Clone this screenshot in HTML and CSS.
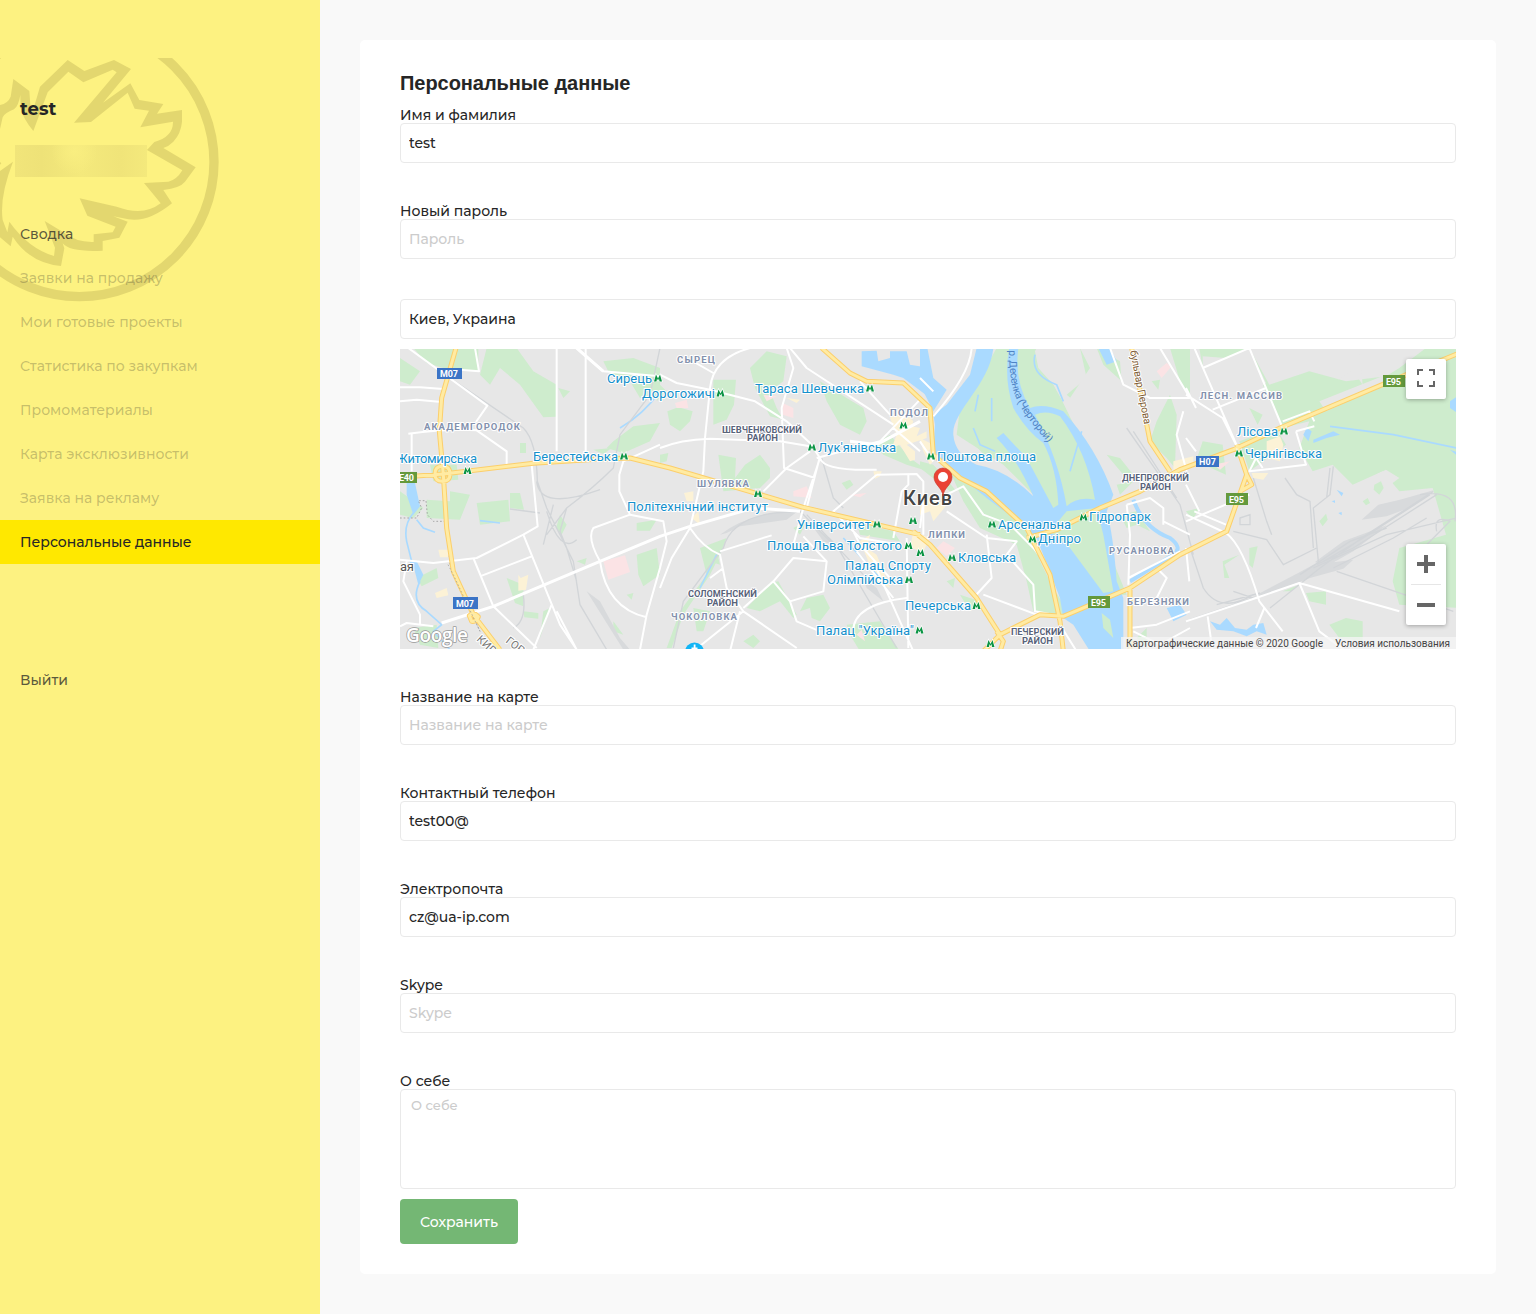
FILE: index.html
```html
<!DOCTYPE html>
<html lang="ru">
<head>
<meta charset="utf-8">
<title>Персональные данные</title>
<link rel="stylesheet" href="styles.css">
</head>
<body>
<div class="layout">
<aside class="sidebar">
  <svg class="emblem" viewBox="0 54 690 740" aria-hidden="true">
    <circle cx="238" cy="366" r="404" fill="none" stroke="#e3d76f" stroke-width="28"/>
    <path fill="#e3d76f" d="M0 195Q24 190 32 170L40 117L88 153L91 195L101 205L120 140L203 60L253 93L342 60L393 87L309 188L391 130L418 180L490 192L471 221L546 210V245Q543 280 520 305Q505 320 490 324L587 382L555 425Q540 444 490 450L516 490Q445 548 385 538L340 529L383 545L358 593L308 603V632Q210 637 188 610L193 625L183 678Q90 670 38 590L32 619L0 592V393L39 365Q-2 470 8 540L22 577L28 545Q85 625 162 648L165 623L134 543L190 577Q230 608 281 606V583L338 577L347 560L262 527L239 475L350 500Q430 530 482 490L432 429L505 425Q530 420 547 391L441 330L463 306Q520 290 519 245L421 262L447 212L404 206L383 158L273 246L222 248L350 97L338 89L250 127L205 95L143 157L100 273Q70 238 62 205L61 165Q55 200 42 208Q12 220 8 232L0 267Z"/>
    <path fill="#e3d76f" d="M0 366L4 370L0 374Z"/>
  </svg>
  <div class="user-name">test</div>
  <div class="user-mask"></div>
  <nav class="menu">
    <a class="menu-item strong">Сводка</a>
    <a class="menu-item">Заявки на продажу</a>
    <a class="menu-item">Мои готовые проекты</a>
    <a class="menu-item">Статистика по закупкам</a>
    <a class="menu-item">Промоматериалы</a>
    <a class="menu-item">Карта эксклюзивности</a>
    <a class="menu-item">Заявка на рекламу</a>
    <a class="menu-item active">Персональные данные</a>
    <a class="menu-item strong logout">Выйти</a>
  </nav>
</aside>
<main class="content">
<form class="card">
  <h1 class="title">Персональные данные</h1>
  <div class="field"><label class="label">Имя и фамилия</label><input class="input" value="test"></div>
  <div class="field"><label class="label">Новый пароль</label><input class="input" placeholder="Пароль"></div>
  <div class="field">
    <input class="input" value="Киев, Украина">
    <div class="map">
<svg class="map-canvas" viewBox="400 349 1056 300">
<g transform="translate(400 348) scale(.333333)">
<rect width="3200" height="910" fill="#e7e7e7"/>
<!-- parks -->
<g fill="#ceeccd">
  <path d="M40 0H235V70L150 66L80 45ZM260 0H350L400 70L470 110L468 206L430 208L360 110L300 60L270 110L240 80ZM0 30L60 70L30 110L0 100ZM475 120L510 130L490 150ZM610 40L700 30L780 60L780 150L720 150L690 100L630 80ZM640 280L700 235L780 225L750 280L670 315L620 300ZM580 305L635 300L610 318ZM150 430L210 440L180 515L80 510V455L150 460ZM230 465L325 455L330 520L240 530ZM330 435L360 435L372 485L330 480ZM360 285H378V315H360ZM0 430L70 480L40 510L0 500ZM320 690L370 710V775L345 765ZM370 790L415 795V812L373 808ZM710 620L770 600L780 680L730 715L715 680ZM710 525L770 515L750 548L710 548ZM50 690L110 660L115 690L65 715ZM480 500L500 530L485 560L468 540ZM530 640L560 630L555 650ZM680 740L700 735L695 755ZM640 820L670 860L640 850ZM90 350L170 350L175 395L100 400ZM40 840L110 830L115 900L60 890ZM430 790L450 780L420 870ZM780 110L800 130L770 160Z"/>
  <g transform="translate(780)"><path d="M160 95L228 95L222 170L200 215L160 230V180ZM22 190L55 178L98 190L90 220L60 250L30 230ZM270 60L320 10L380 25L370 100L330 130L350 180L370 215L330 205L285 120ZM480 100L560 150L610 180L620 220L600 260L540 230L500 160ZM175 320L228 330L225 390L255 350L300 320L330 360L330 390L300 420L190 430ZM545 405L570 395L580 410L560 425ZM120 600L200 570L180 620L150 680L70 800L35 900L20 900L60 790L140 680ZM330 705L355 700L410 800L400 810L360 760L300 790L260 780ZM440 750L490 740L510 780L480 820L455 810L450 780L420 790ZM560 830L660 820L720 910H600L570 860ZM100 780L150 790L130 850L110 850ZM640 290L690 260L750 330L805 370L740 350L670 320ZM590 525L700 550L720 580L600 560ZM400 540L440 520L420 560ZM0 320L25 315L20 340L0 345ZM150 640L175 630L180 650ZM250 880L280 860L300 880L280 900Z"/></g>
  <g transform="translate(1560)"><path d="M230 0H480L510 60L450 150L510 310L550 470L530 520L620 740L560 745L440 600L400 550L410 490L370 470L250 350L110 260L120 180L180 90ZM690 280L710 220L750 140L770 200L765 360L740 330ZM695 100L720 95L715 125ZM750 0H810V150L780 100ZM90 370L140 390L250 460L340 570L360 640L400 720L450 800L400 800L340 790L320 700L290 590L180 540L130 460ZM560 320L600 330L640 380L610 380ZM600 500L650 490L690 550L650 530L620 540ZM0 340L40 350L110 430L90 430L0 360ZM530 0L600 40L605 100L550 50ZM650 870L680 840V900ZM120 740L180 760L150 790ZM80 700L105 690L100 720ZM590 410L640 400L600 440ZM545 790L570 800L580 850L545 840Z"/><path fill="#e7e7e7" d="M345 10L355 60L400 110L425 155L510 330L540 440L580 430L560 320L500 190L440 140L500 90L480 0H350Z"/></g>
  <g transform="translate(2358)"><path d="M40 0H190L250 110L370 70L480 100L600 85L640 60L720 0H818V780L640 770L620 700L640 600L780 560L740 420L640 430L590 370L500 410L440 350L380 370L340 300L370 220L290 240L230 110L50 60ZM50 280L110 290L120 380L30 340ZM160 280L270 240L300 290L190 370ZM190 180L230 200L215 230ZM0 490L40 480L20 515ZM110 640L160 620L115 650L130 690L115 690ZM190 600L215 595L200 660L190 650ZM290 730L340 710L315 730ZM360 735L420 730L420 770L370 760ZM430 830L480 810L530 820V880L460 870Z"/><path fill="#e7e7e7" d="M50 0H190L240 105L150 180L80 180L50 70ZM490 0H520L530 110L500 65L455 95L480 60ZM400 160L600 80L640 90L420 190ZM570 380L600 365L640 390L600 420Z"/></g>
  <g transform="translate(2358)"><path d="M565 410L585 400L593 420L580 440L563 425ZM530 460L545 450L552 465L540 472ZM400 520L420 497L425 515L410 535ZM40 0H190L165 12L120 30L50 25Z"/></g>
</g>
<!-- built-up and hospital tints -->
<g fill="#fcf2d6"><path d="M115 605H145V628H120ZM105 735L140 720L145 742L110 750ZM355 680L362 690L385 680L378 725L355 728ZM852 435L880 430V460L860 460ZM875 510L895 490L900 530ZM1470 210L1500 180L1540 220L1535 235L1560 240L1550 265L1580 250L1580 270L1520 290L1545 310V335L1530 340L1500 290L1475 300L1490 260ZM1560 270L1600 290L1585 310L1600 340L1590 350L1570 310ZM1560 470L1590 450L1640 470L1625 490L1600 520L1590 490L1560 500ZM1540 550L1590 570L1570 610L1530 600ZM1380 580L1410 560L1400 600L1430 620L1470 720L1430 700ZM1160 150L1200 155L1190 165ZM1420 370L1445 370L1440 385L1425 392ZM2600 280L2640 265L2650 290L2640 340L2600 330ZM2555 375L2605 375L2590 395L2560 390ZM2320 340L2380 325V345L2320 370Z"/></g>
<g fill="#fbe3e5"><path d="M610 640L675 622L690 672L625 695ZM825 165L860 155L865 180L830 180ZM1090 140L1130 145L1100 160ZM1148 165L1180 180V210L1148 200ZM1180 430L1220 415L1235 450L1180 445ZM1350 440L1400 435L1380 448ZM1610 600L1630 580L1665 600L1640 625ZM1370 860L1385 845L1395 880ZM2270 70L2300 45L2315 55L2285 90ZM2440 350L2490 340L2460 365Z"/></g>
<!-- water -->
<g fill="#aadaff"><path d="M20 405H45L60 475L40 500L20 440ZM27 640L50 640L70 680L55 710L42 660Z"/><path d="M1385 10L1430 8L1435 40L1470 30V10H1520L1530 50L1590 60V150L1510 90L1480 80L1385 55Z"/><path d="M1560 0H1582L1600 90L1640 125L1600 190L1560 110Z"/><path d="M1730 0H1780C1770 110 1655 190 1660 260Q1665 320 1730 350Q1820 365 1900 445Q1850 330 1790 270L1810 255L1880 330L1960 480L1975 470Q1970 360 1930 285Q1880 250 1840 180Q1810 90 1828 0H1855Q1842 100 1890 180Q1930 165 1990 190Q2090 300 2140 440L2120 490Q2140 560 2150 700L2170 750V910H2070L2020 830L1990 810L1980 750L1910 570L1880 540L1760 450L1680 385L1600 310L1605 230L1600 200L1640 170L1710 80Z"/><path d="M2095 0H2130L2150 40L2120 50ZM2740 275L2800 250L2820 260L2780 270L2740 285ZM2430 820L2460 830L2480 810L2505 840L2540 845L2560 830L2590 825L2600 860L2570 850L2540 865L2500 850L2450 845ZM2720 240L2735 250L2725 280L2710 260ZM3150 160L3180 140V200L3150 180ZM3150 305L3180 315V330ZM2810 425L2830 435L2825 445ZM2795 460L2805 457V465ZM2815 495L2825 492V502ZM2300 780L2340 770L2360 800L2320 820Z"/></g>
<g fill="#ceeccd"><path d="M1905 200Q1940 185 1980 205Q2060 310 2085 455Q2030 445 2000 475Q1975 330 1905 200ZM2000 490L2090 480L2110 560L2140 730L2110 735L2010 600L1950 550ZM1715 250L1775 290L1760 330L1725 290ZM2105 795L2130 815L2140 870L2110 840Z"/></g>
<g fill="none" stroke="#aadaff" stroke-width="5"><path d="M40 495Q10 530 20 580L35 640M60 700Q30 760 80 790L125 830L100 850L150 905M50 515L70 540L105 553M780 130Q730 200 660 240M1905 20Q1890 80 1970 110L1990 160M1735 140L1725 190M1775 150V220M1720 240L1740 290L1785 310M2010 370L2045 250M240 518L300 525M900 720L950 620M1330 570L1440 690M2790 235L2980 260L3170 300"/><path stroke-width="12" d="M2200 455Q2230 540 2310 570Q2350 600 2320 620L2190 700"/></g>
<!-- railways -->
<g fill="#d8dadc"><path d="M960 560Q1050 490 1190 492L1160 515L1020 535L980 555ZM1230 525L1290 570L1320 600L1270 580ZM1390 690L1430 720L1450 760L1400 720ZM2558 747L2700 672L2740 650L2860 635L2830 662L2730 690L2600 740ZM2745 642L2830 580L2960 532L2860 610L2780 655ZM2885 515L2935 470L3000 455L3100 427L3040 475L2960 505ZM560 730L600 760L660 870L690 905H670Z"/></g>
<g fill="none" stroke="#d2d5d8" stroke-width="4"><path d="M150 90L370 240Q410 280 412 400L440 480L520 640L540 770L620 905M780 0L750 140L660 260L640 360Q580 420 500 480L440 560M410 400Q420 490 600 425M430 590L460 470M440 490Q480 620 530 575M500 480L480 550L500 600L530 700M370 740Q380 820 340 840M330 483L420 495M1265 330L1300 450L1330 480M1190 492Q1000 490 970 600L850 760L820 900M1200 490L1320 610L1490 900M1220 500L1390 680M2180 240L2340 470L2380 620M2200 250L2330 450M2370 600L2410 720Q2460 800 2560 740M2655 390L2690 440L2730 460L2740 600M2800 355L2790 440L2740 480L2755 640M2790 360L2780 450M2750 650L2860 600L3110 440M2740 660L2960 560L3170 510M2770 640L2890 570L3090 440M2800 660L2980 570L3080 510M2700 680L2850 580L2960 540M2610 780L2760 660L2900 560L3100 430M2810 670L3160 790M3080 590L3150 520Q3100 500 3110 550M2500 550L2600 575L2650 650L2750 600M2560 390L2600 520L2615 560M2500 730L2560 750L2370 815M2450 770L2580 735M3060 440Q3180 420 3165 520M2520 510L2550 500V530L2520 530Z"/></g>
<!-- streets -->
<g class="streets">
<path d="M25 0L262 173L228 222M225 0L237 70L180 65M0 118H60L130 123M0 160L50 155L125 162M470 0V310M530 0L610 70L780 85M557 0V330M25 257Q150 240 230 247L320 310V350M35 257V370M395 350L413 535L370 560L230 630L100 645L0 635M370 560L480 830L530 905M220 630L280 775L410 900M395 625L240 685M455 770L400 905M470 790L530 905M20 640L10 700L60 800V830M0 835L20 825L100 835M780 290L670 340L658 380V430L690 500L580 540Q560 570 600 640Q620 780 740 808M690 500L790 520L800 580L780 660L740 800L720 905"/>
<path class="major" d="M125 825L280 775L600 640L780 565L870 535L1060 480L1200 490M1560 220L1430 290L1350 280M530 0L610 70"/>
<g transform="translate(780)"><path d="M0 80L50 105L150 125L285 160L380 220L450 285L480 330Q490 370 650 365M0 300Q60 275 150 272L360 280L450 295M270 0Q160 30 150 120L135 270L130 370L90 540L35 630L0 720M90 35L160 75M380 0L400 60L365 180L372 360L465 390M480 325L440 480M450 310L380 360L310 430M480 330L430 480L400 590M335 562L180 610M390 0L440 60L700 230M600 100L690 200M780 155L660 280L470 330M650 380L770 378L790 400V560M650 380L520 490L600 570L720 590M90 540Q130 600 180 620L200 720L250 790L100 910M250 780L340 700L400 630L500 640M340 700L390 760L410 820L480 850M250 790L410 900M240 790L210 910M430 565L500 640L490 730L390 760M560 510L600 590L690 690M640 640L760 910M590 610L700 750M740 570L745 900M580 860Q570 770 740 750M730 220M745 380V410L725 430L700 570M190 660L150 690M700 240L780 310"/></g>
<g transform="translate(1560)"><path d="M155 0Q150 80 40 205M0 280L40 340M80 440L130 415L190 500L270 530L340 600L380 650M80 490L200 570L290 580L260 620L340 710L345 790L400 800M200 560L215 690L160 750M190 740L350 800M570 0L610 110L690 150H810M720 0L810 150M620 470L690 450L730 480L730 530M620 470L630 560L625 710M730 520L810 560M625 690L780 610M630 840L710 830L810 790M640 850L720 890L810 840M710 660L740 690L710 750M790 190L770 260L800 370M0 90L40 130M10 460L0 540M420 830L470 910"/></g>
<g transform="translate(2358)"><path d="M25 0L160 310L180 370M50 60L190 0L290 240M80 185L240 120M290 220L370 190L385 220M0 140L110 210L155 300M330 250L360 350L190 370L210 330L230 360M330 250L385 235M0 520L190 440M25 490L120 530M0 500L120 555Q170 590 220 760L290 850M40 490L0 410M0 600L10 700M0 820L210 750L340 705L640 790M340 705L400 850L480 910M65 805L80 910M235 780L210 840M0 120L30 180M0 270L30 310"/></g>
</g>
<g fill="none" stroke="#888" stroke-width="2" stroke-dasharray="5 6"><path d="M0 510H50L65 480L55 458H78L82 500L100 520H138L150 650L240 850"/></g>
<!-- arterial roads -->
<g fill="none" stroke-linejoin="round">
<g stroke="#fccf6b" stroke-width="15"><use href="#art"/></g>
<g stroke="#ffeba3" stroke-width="9"><path id="art" d="M168 0L125 150L118 250L130 380L140 540L160 670L220 800L300 905M0 388L130 378L400 346L600 333L690 330L810 360L1210 478L1560 560M105 378Q105 355 127 355Q150 355 150 378Q150 400 127 400Q105 400 105 378ZM208 803Q220 790 235 806Q230 822 215 820ZM1265 0L1350 75L1400 100L1510 105L1590 180L1600 320L1680 390L1760 430L1880 540L1950 680L1980 820L1990 910M1880 570L1970 545L2100 480L2220 430L2340 365L2500 305L2640 240L2970 100L3190 10M2195 0L2250 280L2310 370M1540 550L1590 590L1730 750L1800 860L1750 910M1800 860L1920 800L1990 805L2190 720L2340 620L2480 550L2540 380L2510 290M2190 720V910M1790 850L1810 880L1800 910M2540 380L2555 410L2520 430"/></g>
<path d="M144 650L160 680L220 808L240 850" stroke="#999" stroke-width="2" stroke-dasharray="5 6"/>
</g>
</g>
<!-- road shields -->
<g class="shield"><path fill="#3b74c6" d="M437 368H462V379H437ZM453 597H478V609H453ZM1196 456H1219V467H1196Z"/><path fill="#64993c" d="M400 472H417V483H400ZM1088 596H1110V608H1088ZM1226 493H1248V505H1226ZM1383 375H1405V387H1383Z"/>
<text x="440" y="377" textLength="18">M07</text><text x="456" y="606.500" textLength="18">M07</text><text x="1199" y="465" textLength="17">H07</text><text x="399" y="481" textLength="15">E40</text><text x="1091" y="605.500" textLength="15">E95</text><text x="1229" y="502.500" textLength="15">E95</text><text x="1386" y="384.500" textLength="15">E95</text></g>
<!-- metro marks -->
<defs><path id="m" d="M-4 3L-2-4L0 0L2-4L4 3H1.500L1 0L0 2L-1 0L-1.500 3Z"/></defs>
<g fill="#0b9444" stroke="#fff" stroke-width="1.200" paint-order="stroke"><use href="#m" x="658" y="378.500"/><use href="#m" x="720.500" y="393.500"/><use href="#m" x="870" y="388.500"/><use href="#m" x="903.500" y="425.500"/><use href="#m" x="812" y="447.500"/><use href="#m" x="931" y="456.500"/><use href="#m" x="467.500" y="471"/><use href="#m" x="624" y="456.500"/><use href="#m" x="758" y="494"/><use href="#m" x="877" y="524.500"/><use href="#m" x="913" y="521"/><use href="#m" x="908.500" y="546"/><use href="#m" x="920.500" y="553"/><use href="#m" x="909" y="580"/><use href="#m" x="992" y="524.500"/><use href="#m" x="1083.500" y="517.500"/><use href="#m" x="1032.500" y="539.500"/><use href="#m" x="952" y="558"/><use href="#m" x="976.500" y="606"/><use href="#m" x="919.500" y="630.500"/><use href="#m" x="990.500" y="644"/><use href="#m" x="1284" y="431.500"/><use href="#m" x="1239" y="453.500"/></g>
<g class="station" transform="translate(0 -.5)">
<text x="607" y="383" textLength="45">Сирець</text><text x="642" y="398" textLength="73">Дорогожичі</text><text x="755" y="393" textLength="109">Тараса Шевченка</text><text x="818" y="452" textLength="78">Лук'янівська</text><text x="937" y="461" textLength="99">Поштова площа</text><text x="396" y="463" textLength="81">Житомирська</text><text x="533" y="461" textLength="85">Берестейська</text><text x="627" y="511" textLength="141">Політехнічний інститут</text><text x="797" y="529" textLength="74">Університет</text><text x="767" y="550" textLength="135">Площа Льва Толстого</text><text x="845" y="570" textLength="86">Палац Спорту</text><text x="827" y="584" textLength="76">Олімпійська</text><text x="998" y="529" textLength="73">Арсенальна</text><text x="1089" y="521.500" textLength="62">Гідропарк</text><text x="1038" y="543.500" textLength="43">Дніпро</text><text x="958" y="562.500" textLength="58">Кловська</text><text x="905" y="610.500" textLength="66">Печерська</text><text x="816" y="635" textLength="98">Палац "Україна"</text><text x="1237" y="436" textLength="41">Лісова</text><text x="1245" y="458" textLength="77">Чернігівська</text></g>
<g class="area"><text x="677" y="363" textLength="38">СЫРЕЦ</text><text x="890" y="415.500" textLength="38">ПОДОЛ</text><text x="424" y="430" textLength="96">АКАДЕМГОРОДОК</text><text x="697" y="486.500" textLength="52">ШУЛЯВКА</text><text x="928" y="537.500" textLength="37">ЛИПКИ</text><text x="671" y="620" textLength="66">ЧОКОЛОВКА</text><text x="1109" y="553.500" textLength="65">РУСАНОВКА</text><text x="1127" y="604.500" textLength="62">БЕРЕЗНЯКИ</text><text x="1200" y="399" textLength="82">ЛЕСН. МАССИВ</text></g>
<g class="district"><text x="722" y="432.500" textLength="80">ШЕВЧЕНКОВСКИЙ</text><text x="747" y="441" textLength="31">РАЙОН</text><text x="688" y="597" textLength="69">СОЛОМЕНСКИЙ</text><text x="707" y="606" textLength="31">РАЙОН</text><text x="1122" y="481" textLength="67">ДНЕПРОВСКИЙ</text><text x="1140" y="490" textLength="31">РАЙОН</text><text x="1011" y="635" textLength="53">ПЕЧЕРСКИЙ</text><text x="1022" y="644" textLength="31">РАЙОН</text></g>
<path id="river" d="M1009 350C1009 392 1018 405 1031 422S1046 438 1054 455" fill="none"/>
<text class="river"><textPath href="#river" textLength="104">р. Десенка (Черторой)</textPath></text>
<text class="street" transform="translate(1130 351) rotate(79)" textLength="75">бульвар Перова</text>
<text class="town" x="400" y="571" textLength="14">ая</text>
<text class="road-name" transform="translate(476 640) rotate(43)">КИРОВА</text><text class="road-name" transform="translate(505 642) rotate(38)">ГОРОД</text>
<text class="city" x="903" y="505" textLength="49">Киев</text>
<text class="google" x="406" y="642" textLength="62">Google</text>
<path d="M943 496C942 487 934 485 934 477A9 9 0 0 1 952 477C952 485 944 487 943 496Z" fill="#ea4335" stroke="#c5382c" stroke-width=".6"/><circle cx="943" cy="477" r="5" fill="#fff"/>
<circle cx="694.500" cy="652" r="9.500" fill="#13b5f5"/><path d="M693.700 644.500h1.800v3h2v1.500h-6v-1.500h2.200Z" fill="#fff"/>
<path d="M1121 637H1456V649H1121Z" fill="#f5f5f5" opacity=".75"/>
<g class="legal"><text x="1126" y="646.500" textLength="197">Картографические данные © 2020 Google</text><text x="1335" y="646.500" textLength="115">Условия использования</text></g>
</svg>
<button class="map-button fullscreen" type="button" aria-label="Во весь экран"><svg width="18" height="18" viewBox="0 0 18 18"><path d="M0 0h6v2H2v4H0zM12 0h6v6h-2V2h-4zM0 12h2v4h4v2H0zM16 12h2v6h-6v-2h4z" fill="#666"/></svg></button>
<div class="zoom">
<button class="map-button" type="button" aria-label="Увеличить"><svg width="18" height="18" viewBox="0 0 18 18"><path d="M7 0h4v7h7v4h-7v7H7v-7H0V7h7z" fill="#666"/></svg></button>
<button class="map-button" type="button" aria-label="Уменьшить"><svg width="18" height="18" viewBox="0 0 18 18"><path d="M0 7h18v4H0z" fill="#666"/></svg></button>
</div>
    </div>
  </div>
  <div class="field"><label class="label">Название на карте</label><input class="input" placeholder="Название на карте"></div>
  <div class="field"><label class="label">Контактный телефон</label><input class="input" value="test00@"></div>
  <div class="field"><label class="label">Электропочта</label><input class="input" value="cz@ua-ip.com"></div>
  <div class="field"><label class="label">Skype</label><input class="input" placeholder="Skype"></div>
  <div class="field last"><label class="label">О себе</label><textarea class="input area-input" placeholder="О себе"></textarea></div>
  <button class="save" type="button">Сохранить</button>
</form>
</main>
</div>
</body>
</html>
```
FILE: styles.css
```css
*{box-sizing:border-box}
body{margin:0;background:#f9f9f9;color:#262626;font:500 14px/16px Montserrat,Inter,sans-serif}
.layout{display:flex;min-height:1314px}
.sidebar{position:relative;width:320px;flex:none;background:#fdf281;padding-top:97px}
.emblem{position:absolute;left:0;top:58px;width:230px;height:246.67px}
.user-name{position:relative;padding-left:20px;font-size:18px;font-weight:700;line-height:24px}
.user-mask{position:relative;width:132px;height:32px;margin:24px 0 35px 15px;background:radial-gradient(circle at 45% 20%,#f9ee80,transparent 30%),linear-gradient(90deg,#f1e57a,#eee278 20%,#f4e97c 50%,#f0e479 80%,#f4e97c)}
.menu{position:relative;display:flex;flex-direction:column}
.menu-item{height:44px;padding-left:20px;line-height:44px;color:rgba(38,38,38,.26)}
.menu-item.strong{color:rgba(38,38,38,.75)}
.menu-item.active{background:#ffe800;color:#262626}
.logout{margin-top:94px}
.content{flex:1;padding:40px}
.card{height:1234px;padding:30px 40px;background:#fff;border-radius:5px}
.title{margin:0 0 11px;font:bold 20px/26px "Liberation Sans",Arial,sans-serif;letter-spacing:-.05px}
.field{margin-bottom:40px}
.field.last{margin-bottom:10px}
.label{display:block;height:16px}
.input{display:block;width:100%;height:40px;padding:0 8px;border:1px solid #e9e9e9;border-radius:4px;background:#fff;color:#262626;font:inherit;outline:0}
.input::placeholder{color:#ccc;opacity:1}
.area-input{height:100px;padding:7px 10px;font-size:13px;resize:none}
.save{display:block;width:118px;height:45px;padding:0;border:0;border-radius:4px;background:#74b774;color:#fff;font:inherit}
.map{position:relative;height:300px;margin-top:10px;overflow:hidden}
.map-canvas{display:block;width:100%;height:300px;font-family:Roboto,sans-serif;font-weight:400}
.map-canvas text{paint-order:stroke;stroke-linejoin:round}
.streets{fill:none;stroke:#fff;stroke-width:6px;stroke-linejoin:round}
.streets .major{stroke-width:9px}
.shield text{fill:#fff;font-size:9px;font-weight:700}
.station text{fill:#1490cc;stroke:#fff;stroke-width:2px;font-size:13px}
.area text{fill:#8391ad;stroke:#fff;stroke-width:2px;font-size:9.500px;font-weight:700}
.district text{fill:#59637a;stroke:#fff;stroke-width:2px;font-size:9.500px;font-weight:700}
.river{fill:#4f83c4;font-size:10.500px}
.street{fill:#7d5a30;stroke:#fff;stroke-width:2px;font-size:10.500px}
.town{fill:#555;stroke:#fff;stroke-width:2px;font-size:13px}
.road-name{fill:#777;stroke:#fff;stroke-width:2px;font-size:11px}
.city{fill:#444;stroke:#fff;stroke-width:2px;font-size:20px;font-weight:500}
.google{fill:#fff;stroke:#999;stroke-width:1.500px;font:600 19px "Open Sans",sans-serif}
.legal text{fill:#444;font-size:10px}
.map-button{display:flex;align-items:center;justify-content:center;width:40px;height:40px;padding:0;border:0;background:#fff}
.fullscreen{position:absolute;right:10px;top:10px;border-radius:2px;box-shadow:0 1px 4px rgba(0,0,0,.3);padding-bottom:2px}
.zoom{position:absolute;right:10px;bottom:24px;display:flex;flex-direction:column;height:81px;border-radius:2px;background:linear-gradient(#e6e6e6,#e6e6e6) center/30px 1px no-repeat #fff;box-shadow:0 1px 4px rgba(0,0,0,.3);gap:1px}
.zoom .map-button{background:none}
```
